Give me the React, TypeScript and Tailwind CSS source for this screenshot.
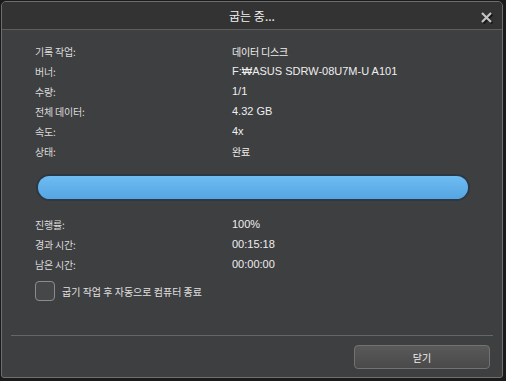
import React from "react";

const info = [
  ["기록 작업:", "데이터 디스크"],
  ["버너:", "F:₩ASUS SDRW-08U7M-U A101"],
  ["수량:", "1/1"],
  ["전체 데이터:", "4.32 GB"],
  ["속도:", "4x"],
  ["상태:", "완료"],
];

const progress = [
  ["진행률:", "100%"],
  ["경과 시간:", "00:15:18"],
  ["남은 시간:", "00:00:00"],
];

const kr = { fontFamily: '"Noto Sans CJK KR", sans-serif' };
const val = { fontFamily: '"Liberation Sans", "Noto Sans CJK KR", sans-serif' };

function Row({ label, value }: { label: string; value: string }) {
  const hangul = /[가-힣]/.test(value);
  return (
    <div className="flex h-[20px] items-center">
      <span className="w-[197px] text-[10px] tracking-[-0.2px] text-[#dcdcdc]" style={kr}>
        {label}
      </span>
      {hangul ? (
        <span className="text-[10px] tracking-[-0.2px] text-[#eeeeee]" style={kr}>
          {value}
        </span>
      ) : (
        <span className="text-[11px] text-[#eeeeee]" style={val}>
          {value}
        </span>
      )}
    </div>
  );
}

export default function App() {
  return (
    <div className="w-[506px] h-[381px] bg-[#1b1b1b] pt-px pl-px pr-[3px] pb-[3px]">
      <div className="h-full flex flex-col border border-[#6e6e6e] rounded-t-[5px] rounded-b-[3px] overflow-hidden bg-[#3e3f41]">
        {/* title bar */}
        <div className="relative h-[28px] shrink-0 bg-[#333333] border-b border-[#5e5e5e] flex items-center justify-center">
          <span className="text-[12px] text-[#f0f0f0]" style={kr}>
            굽는 중...
          </span>
          <svg
            className="absolute right-[8px] top-[9px]"
            width="14"
            height="13"
            viewBox="0 0 14 13"
          >
            <path d="M2.5 2.5 L11.5 11.5 M11.5 2.5 L2.5 11.5" stroke="#161616" strokeWidth="2.6" transform="translate(0.8 0.8)" />
            <path d="M2 2 L11 11 M11 2 L2 11" stroke="#c4c4c4" strokeWidth="2.2" />
          </svg>
        </div>

        {/* body */}
        <div className="flex flex-col px-[33px] pt-[11px]">
          {info.map(([l, v]) => (
            <Row key={l} label={l} value={v} />
          ))}

          <div className="mt-[13px] ml-px w-[434px] h-[27px] rounded-full border-2 border-[#2c3844]">
            <div className="h-full w-full rounded-full bg-gradient-to-b from-[#6ebcf2] to-[#55a5e3]" />
          </div>

          <div className="mt-[13px]">
            {progress.map(([l, v]) => (
              <Row key={l} label={l} value={v} />
            ))}
          </div>

          <label className="mt-[7px] flex items-center gap-[7px]">
            <span className="w-[20px] h-[20px] rounded-[4px] border border-[#8c8c8c] bg-[#464749]" />
            <span className="text-[10px] text-[#e0e0e0]" style={kr}>
              굽기 작업 후 자동으로 컴퓨터 종료
            </span>
          </label>
        </div>

        <div className="mt-auto mx-[9px] h-px bg-[#666666]" />

        <div className="flex justify-end px-[12px] pt-[9px] pb-[8px]">
          <button
            className="w-[136px] h-[24px] rounded-[4px] border border-[#727272] bg-gradient-to-b from-[#595959] to-[#4a4a4a] text-[10px] text-[#eeeeee]"
            style={kr}
          >
            닫기
          </button>
        </div>
      </div>
    </div>
  );
}
